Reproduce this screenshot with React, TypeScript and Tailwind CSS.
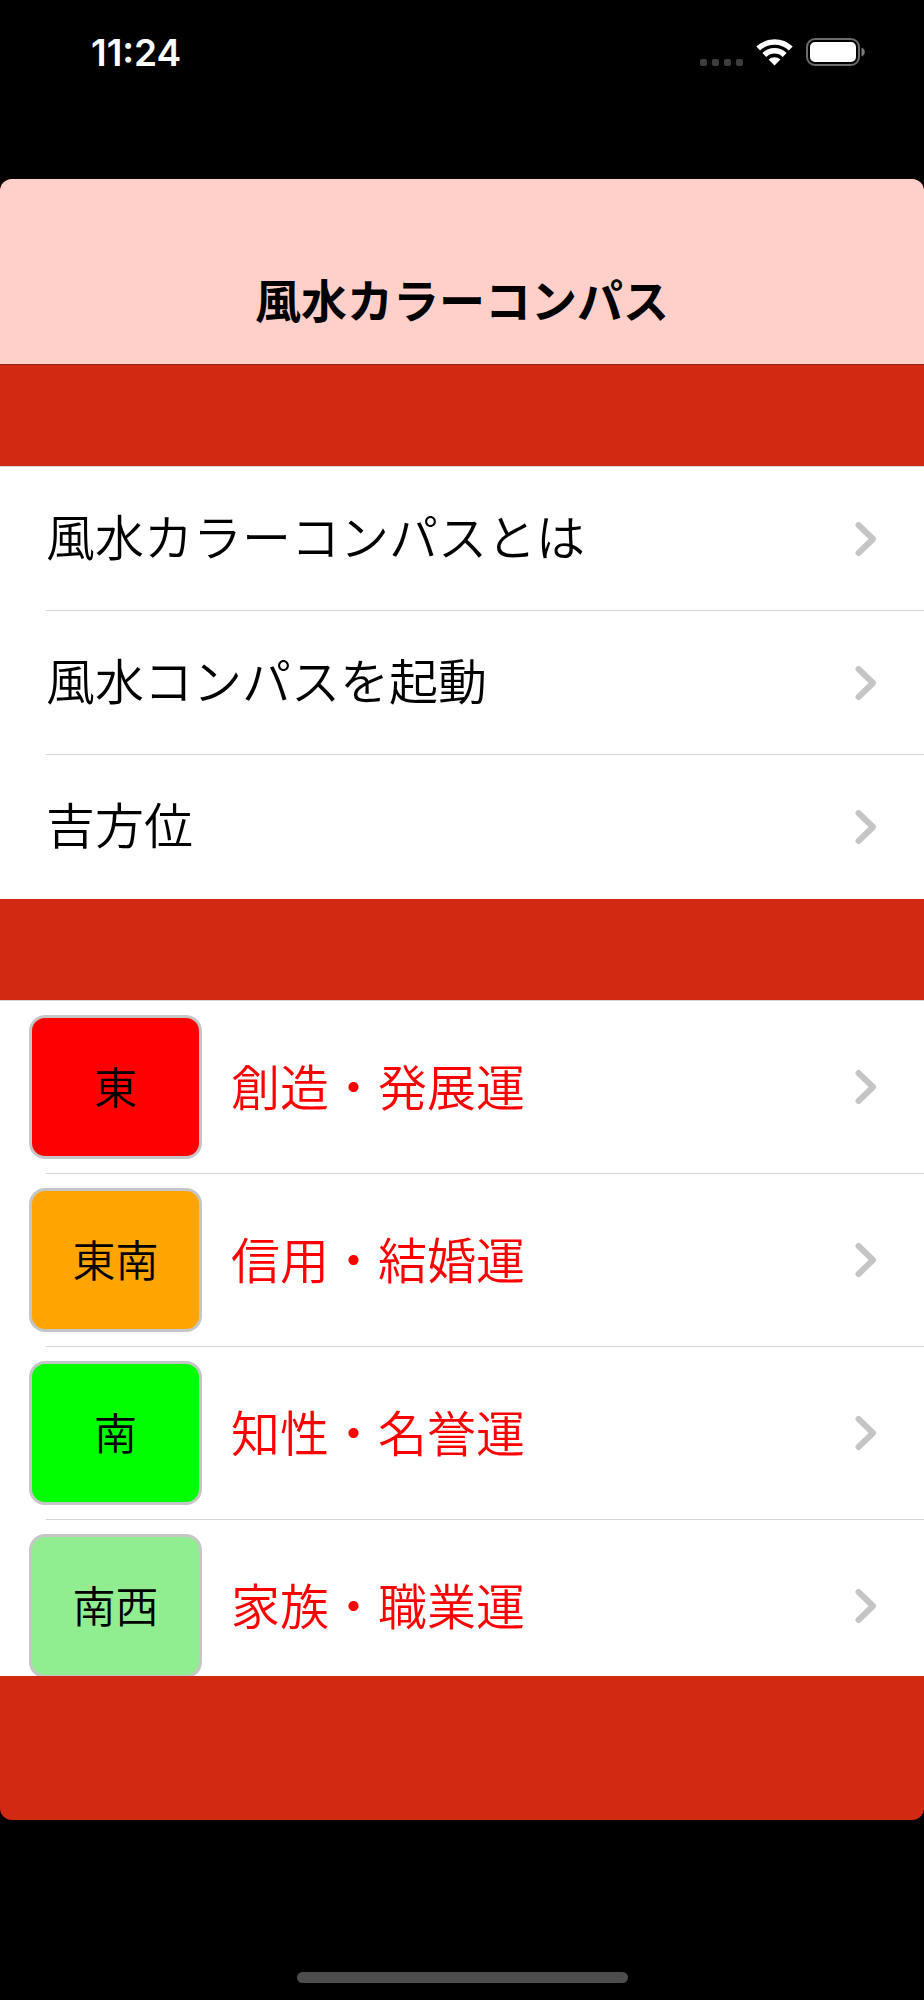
import { useState } from 'react';

interface Direction {
  id: string;
  name: string;
  luck: string;
  color: string;
}

const menuItems = [
  { id: 'about', title: '風水カラーコンパスとは' },
  { id: 'compass', title: '風水コンパスを起動' },
  { id: 'lucky', title: '吉方位' },
];

const directions: Direction[] = [
  { id: 'e', name: '東', luck: '創造・発展運', color: 'bg-[#ff0000]' },
  { id: 'se', name: '東南', luck: '信用・結婚運', color: 'bg-[#ffa500]' },
  { id: 's', name: '南', luck: '知性・名誉運', color: 'bg-[#00ff00]' },
  { id: 'sw', name: '南西', luck: '家族・職業運', color: 'bg-[#90ee90]' },
];

function Chevron() {
  return (
    <svg className="w-[22px] h-9 shrink-0" viewBox="0 0 22 36" fill="none" aria-hidden="true">
      <path d="M3.5 4 L18 18 L3.5 32" stroke="#c5c5c7" strokeWidth="6" strokeLinecap="round" strokeLinejoin="round" />
    </svg>
  );
}

function StatusBar() {
  return (
    <div className="h-[179px] shrink-0 flex items-start justify-between pt-8 pl-[91px] pr-[58px]">
      <span className="font-['Inter',sans-serif] font-semibold text-[37px] leading-[42px] text-white">11:24</span>
      <div className="flex items-end gap-[13px] pt-[6px]">
        <div className="flex gap-[5px]">
          {[0, 1, 2, 3].map((i) => (
            <span key={i} className="w-[7px] h-[7px] rounded-[2px] bg-[#3d3d3f]" />
          ))}
        </div>
        <svg className="w-[37px] h-7" viewBox="0 0 37 28" aria-hidden="true">
          <g fill="none" stroke="#fff" strokeWidth="5.5">
            <path d="M2.2 10.6 A23.5 23.5 0 0 1 34.8 10.6" />
            <path d="M8.3 17 A14.6 14.6 0 0 1 28.7 17" />
          </g>
          <path d="M18.5 27.5 L12.6 21.6 A8.4 8.4 0 0 1 24.4 21.6 Z" fill="#fff" />
        </svg>
        <svg className="w-[60px] h-7" viewBox="0 0 60 28" aria-hidden="true">
          <rect x="1" y="1" width="52" height="26" rx="8" fill="none" stroke="#6b6b6b" strokeWidth="2" />
          <rect x="4" y="4" width="46" height="20" rx="5" fill="#fff" />
          <path d="M55.5 9.5 Q58.8 11 58.8 14 Q58.8 17 55.5 18.5 Z" fill="#7a7a7a" />
        </svg>
      </div>
    </div>
  );
}

export default function App() {
  const [selected, setSelected] = useState<string | null>(null);

  return (
    <div className="h-screen bg-black flex flex-col font-['Noto_Sans_CJK_JP',sans-serif]">
      <StatusBar />

      <div className="flex-1 min-h-0 flex flex-col rounded-xl overflow-hidden bg-[#d22913]">
        <header className="h-[186px] shrink-0 flex items-end justify-center pb-9 bg-[#ffd0ca] border-b border-[#8f2418]">
          <h1 className="text-[46px] leading-[60px] font-bold text-black">風水カラーコンパス</h1>
        </header>

        <main className="flex-1 min-h-0 overflow-hidden">
          <ul className="mt-[101px] bg-white border-t border-[#d4d4d6]">
            {menuItems.map((item) => (
              <li key={item.id} className="group">
                <button
                  onClick={() => setSelected(item.id)}
                  aria-pressed={selected === item.id}
                  className="w-full pl-[46px] text-left"
                >
                  <span className="h-36 flex items-center justify-between pr-[47px] border-b border-[#d4d4d6] group-last:border-white">
                    <span className="pb-2 text-[49px] leading-[60px] font-[350] text-black">{item.title}</span>
                    <Chevron />
                  </span>
                </button>
              </li>
            ))}
          </ul>

          <ul className="mt-[101px] bg-white border-t border-[#d4d4d6]">
            {directions.map((dir) => (
              <li key={dir.id}>
                <button
                  onClick={() => setSelected(dir.id)}
                  aria-pressed={selected === dir.id}
                  className="w-full text-left"
                >
                  <span className="h-[172px] flex items-center pl-[29px] pr-[47px]">
                    <span
                      className={`w-[173px] h-36 shrink-0 flex items-center justify-center pb-1 rounded-2xl border-3 border-[#c6c6c8] text-[43px] leading-[60px] font-[350] text-black ${dir.color}`}
                    >
                      {dir.name}
                    </span>
                    <span className="flex-1 pl-[29px] pb-1 text-[49px] leading-[60px] font-[350] text-[#ff0000]">{dir.luck}</span>
                    <Chevron />
                  </span>
                  <span className="block ml-[46px] h-px bg-[#d4d4d6]" />
                </button>
              </li>
            ))}
          </ul>
        </main>

        {/* ツールバー領域 */}
        <footer className="h-36 shrink-0" />
      </div>

      {/* ホームインジケーター */}
      <div className="h-[180px] shrink-0 flex items-end justify-center pb-[17px]">
        <div className="w-[331px] h-[11px] rounded-full bg-[#4d4d4d]" />
      </div>
    </div>
  );
}
